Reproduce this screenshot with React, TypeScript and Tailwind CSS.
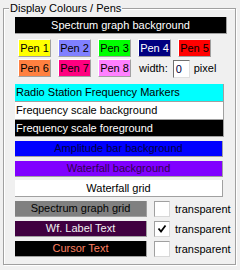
import React from "react";

type BarProps = {
  label: string;
  bg: string;
  fg: string;
  w: string;
  h: string;
  left?: boolean;
  mt?: string;
};

function Bar({ label, bg, fg, w, h, left, mt }: BarProps) {
  return (
    <div
      className={`flex items-center border-r border-b border-[#a0a0a0] text-[11px] leading-none whitespace-nowrap ${bg} ${fg} ${w} ${h} ${mt ?? ""} ${
        left ? "justify-start pl-[1px]" : "justify-center"
      }`}
    >
      {label}
    </div>
  );
}

function Pen({ label, bg, fg }: { label: string; bg: string; fg: string }) {
  return (
    <div
      className={`flex h-[18px] w-[33px] items-center justify-center border border-t-white border-l-white border-r-[#a0a0a0] border-b-[#a0a0a0] text-[11px] leading-none ${bg} ${fg}`}
    >
      {label}
    </div>
  );
}

function Check({ checked }: { checked?: boolean }) {
  return (
    <div className="ml-[7px] flex h-[16px] w-[16px] items-center justify-center border border-t-[#a0a0a0] border-l-[#a0a0a0] border-r-[#d8d8d8] border-b-[#d8d8d8] bg-white">
      {checked && (
        <svg width="10" height="10" viewBox="0 0 10 10">
          <polyline points="1.5,4.5 4,7.5 8.5,1.5" fill="none" stroke="#000" strokeWidth="1.8" />
        </svg>
      )}
    </div>
  );
}

function Transp({ children, checked }: { children: React.ReactNode; checked?: boolean }) {
  return (
    <div className="mt-[4px] flex h-[16px] items-center">
      {children}
      <Check checked={checked} />
      <span className="ml-[5px] text-[11px] leading-none text-black">transparent</span>
    </div>
  );
}

export default function App() {
  return (
    <div
      className="h-[270px] w-[240px] overflow-hidden bg-[#f0f0f0] pt-[8px] pl-[3px]"
      style={{ fontFamily: '"Liberation Sans", Arial, sans-serif' }}
    >
      <div className="relative h-[257px] w-[233px] border border-[#a0a0a0] shadow-[inset_1px_1px_0_#fff,1px_1px_0_#fff]">
        <span className="absolute left-[5px] top-[-8px] bg-[#f0f0f0] px-[1px] text-[11px] leading-[14px] text-black">
          Display Colours / Pens
        </span>

        <div className="flex flex-col pt-[8px] pl-[11px]">
          <Bar label="Spectrum graph background" bg="bg-black" fg="text-white" w="w-[212px]" h="h-[17px]" />

          <div className="mt-[5px] ml-[3px] flex gap-[7px]">
            <Pen label="Pen 1" bg="bg-[#ffff00]" fg="text-black" />
            <Pen label="Pen 2" bg="bg-[#8080ff]" fg="text-black" />
            <Pen label="Pen 3" bg="bg-[#00ff00]" fg="text-black" />
            <Pen label="Pen 4" bg="bg-[#000080]" fg="text-white" />
            <Pen label="Pen 5" bg="bg-[#ff0000]" fg="text-black" />
          </div>

          <div className="mt-[2px] ml-[3px] flex h-[18px] items-start gap-[7px]">
            <Pen label="Pen 6" bg="bg-[#ff8040]" fg="text-black" />
            <Pen label="Pen 7" bg="bg-[#ff0080]" fg="text-black" />
            <Pen label="Pen 8" bg="bg-[#ff80ff]" fg="text-black" />
            <div className="flex items-start">
              <span className="ml-[1px] mt-[4px] text-[11px] leading-none text-black">width:</span>
              <div className="ml-[5px] mt-[1px] flex h-[18px] w-[17px] items-center border border-t-[#707070] border-l-[#707070] border-r-[#e0e0e0] border-b-[#e0e0e0] bg-white pl-[2px] text-[11px] leading-none text-[#000040]">
                0
              </div>
              <span className="ml-[4px] mt-[4px] text-[11px] leading-none text-black">pixel</span>
            </div>
          </div>

          <Bar label="Radio Station Frequency Markers" bg="bg-[#00ffff]" fg="text-black" w="w-[209px]" h="h-[18px]" left mt="mt-[7px]" />
          <Bar label="Frequency scale background" bg="bg-white" fg="text-black" w="w-[209px]" h="h-[18px]" left />
          <Bar label="Frequency scale foreground" bg="bg-black" fg="text-white" w="w-[209px]" h="h-[17px]" left />

          <Bar label="Amplitude bar background" bg="bg-[#0000ff]" fg="text-[#000040]" w="w-[208px]" h="h-[16px]" mt="mt-[4px]" />
          <Bar label="Waterfall background" bg="bg-[#8000ff]" fg="text-[#300050]" w="w-[208px]" h="h-[16px]" mt="mt-[4px]" />
          <Bar label="Waterfall grid" bg="bg-white" fg="text-black" w="w-[208px]" h="h-[17px]" mt="mt-[3px]" />

          <Transp>
            <Bar label="Spectrum graph grid" bg="bg-[#808080]" fg="text-black" w="w-[132px]" h="h-[16px]" />
          </Transp>
          <Transp checked>
            <Bar label="Wf. Label Text" bg="bg-[#400040]" fg="text-[#f0f0f0]" w="w-[132px]" h="h-[16px]" />
          </Transp>
          <Transp>
            <Bar label="Cursor Text" bg="bg-black" fg="text-[#ff8060]" w="w-[132px]" h="h-[16px]" />
          </Transp>
        </div>
      </div>
    </div>
  );
}
